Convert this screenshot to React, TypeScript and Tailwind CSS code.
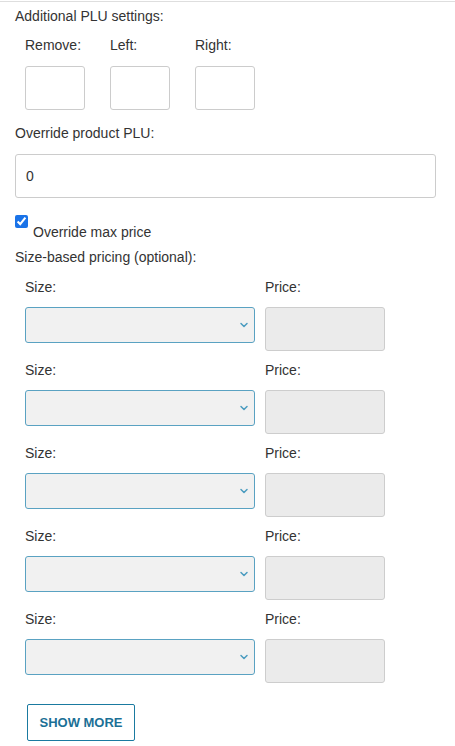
import { ChevronDown } from 'lucide-react';

const rows = [0, 1, 2, 3, 4];

function SizeRow() {
  return (
    <div className="pl-[25px]">
      <div className="flex h-5 items-center">
        <span className="w-[240px]">Size:</span>
        <span>Price:</span>
      </div>
      <div className="mt-[10px] flex gap-[10px] items-start">
        <div className="relative h-[36px] w-[230px] rounded-[3px] border border-[#5aa2c2] bg-[#f1f1f1]">
          <ChevronDown
            size={12}
            strokeWidth={3}
            className="absolute right-[4px] top-[11px] text-[#4b9cc0]"
          />
        </div>
        <div className="h-[44px] w-[120px] rounded-[3px] border border-[#cdcdcd] bg-[#ebebeb]" />
      </div>
    </div>
  );
}

export default function App() {
  return (
    <div
      className="mt-px min-h-[745px] w-[455px] border-t border-[#dedede] bg-white pt-[4px] text-[14px] leading-5 text-[#333]"
      style={{ fontFamily: '"Liberation Sans", Arial, sans-serif' }}
    >
      <div className="pl-[15px]">Additional PLU settings:</div>

      {/* remove / left / right */}
      <div className="mt-[9px] flex gap-[25px] pl-[25px]">
        {['Remove:', 'Left:', 'Right:'].map((label) => (
          <div key={label} className="w-[60px]">
            <div className="h-5 whitespace-nowrap">{label}</div>
            <div className="mt-[11px] h-[44px] w-[60px] rounded-[3px] border border-[#cccccc] bg-white" />
          </div>
        ))}
      </div>

      <div className="mt-[13px] pl-[15px]">Override product PLU:</div>
      <div className="mx-[15px] mt-[11px] mr-[19px] flex h-[44px] items-center rounded-[3px] border border-[#cccccc] bg-white pl-[10px]">
        0
      </div>

      <div className="mt-[17px] flex items-start pl-[15px]">
        <input
          type="checkbox"
          checked
          readOnly
          className="h-[13px] w-[13px] accent-[#1a73e8]"
        />
        <span className="ml-[5px] mt-[7px]">Override max price</span>
      </div>

      <div className="mt-[5px] pl-[15px]">Size-based pricing (optional):</div>

      <div className="mt-[10px] flex flex-col gap-[9px]">
        {rows.map((r) => (
          <SizeRow key={r} />
        ))}
      </div>

      <div className="mt-[21px] pl-[27px]">
        <button className="h-[37px] w-[108px] rounded-[2px] border border-[#1a7aa0] bg-white text-[13px] font-bold text-[#1b7096]">
          SHOW MORE
        </button>
      </div>
    </div>
  );
}
